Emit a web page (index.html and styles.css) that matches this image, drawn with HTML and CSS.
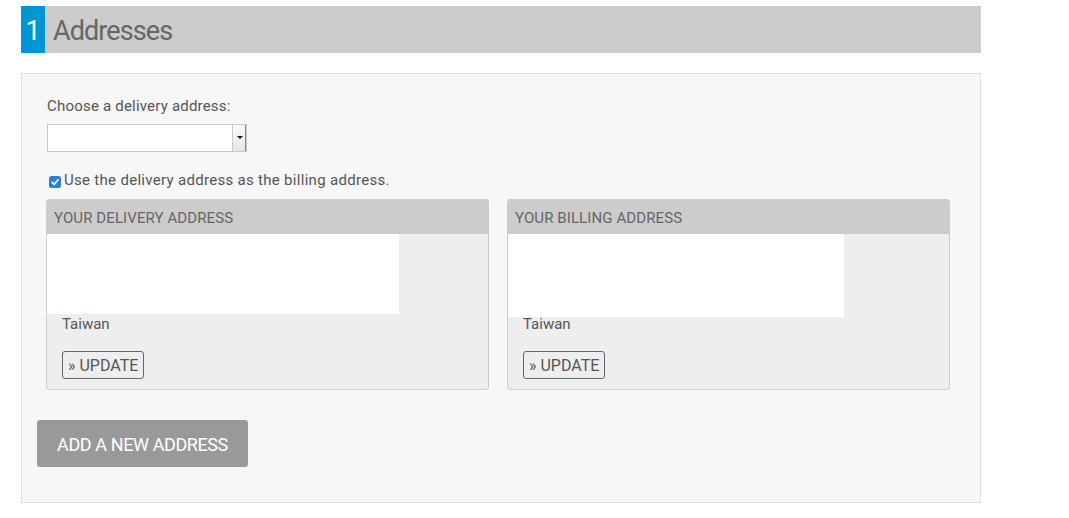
FILE: index.html
```html
<!DOCTYPE html>
<html>
<head>
<meta charset="utf-8">
<link rel="stylesheet" href="styles.css">
</head>
<body>
<div class="page">
  <h1 class="step-title"><span class="step-num">1</span><span class="step-label">Addresses</span></h1>
  <div class="panel">
    <label class="field-label">Choose a delivery address:</label>
    <div class="select"><span class="select-arrow"></span></div>
    <label class="check-row"><span class="checkbox"><svg viewBox="0 0 12 12" width="12" height="12"><rect x="0" y="0" width="12" height="12" rx="2.5" fill="#2d7fd6"/><path d="M3 6.3 L5.1 8.4 L9.2 3.8" fill="none" stroke="#fff" stroke-width="1.6" stroke-linecap="round" stroke-linejoin="round"/></svg></span>Use the delivery address as the billing address.</label>
    <div class="cards">
      <div class="card">
        <div class="card-head">YOUR DELIVERY ADDRESS</div>
        <div class="card-body">
          <div class="redact redact-a"></div>
          <div class="country">Taiwan</div>
          <button class="update">» UPDATE</button>
        </div>
      </div>
      <div class="card">
        <div class="card-head">YOUR BILLING ADDRESS</div>
        <div class="card-body">
          <div class="redact redact-b"></div>
          <div class="country">Taiwan</div>
          <button class="update">» UPDATE</button>
        </div>
      </div>
    </div>
    <button class="add-btn">ADD A NEW ADDRESS</button>
  </div>
</div>
</body>
</html>
```
FILE: styles.css
```css
html, body {
  margin: 0;
  padding: 0;
  background: #fff;
}
body {
  font-family: Roboto, "Liberation Sans", sans-serif;
  color: #555;
}
.page {
  width: 960px;
  padding: 6px 0 0 21px;
}
.step-title {
  margin: 0;
  height: 47px;
  display: flex;
  align-items: center;
  background: #cccccc;
  font-weight: 400;
  font-size: 27px;
}
.step-num {
  width: 24px;
  height: 47px;
  background: #0096d4;
  color: #fff;
  display: flex;
  align-items: center;
  justify-content: center;
  padding-top: 3px;
  box-sizing: border-box;
}
.step-label {
  margin-left: 8px;
  padding-top: 3px;
  color: #666;
  letter-spacing: -0.9px;
}
.panel {
  margin-top: 20px;
  background: #f7f7f7;
  border: 1px solid #dddddd;
  height: 430px;
  box-sizing: border-box;
  padding: 22px 0 0 25px;
}
.field-label {
  display: block;
  font-size: 15px;
  color: #555;
  line-height: 20px;
  letter-spacing: 0.2px;
}
.select {
  margin-top: 8px;
  width: 200px;
  height: 28px;
  box-sizing: border-box;
  background: #fff;
  border: 1px solid #c8c8c8;
  position: relative;
}
.select-arrow {
  position: absolute;
  right: 0;
  top: 0;
  width: 14px;
  height: 26px;
  border-left: 1px solid #ccc;
  border-right: 1px solid #888;
  box-sizing: border-box;
  background: linear-gradient(#fafafa, #e6e6e6);
}
.select-arrow::after {
  content: "";
  position: absolute;
  left: 4px;
  top: 11px;
  border-left: 3px solid transparent;
  border-right: 3px solid transparent;
  border-top: 3px solid #111;
}
.check-row {
  display: flex;
  align-items: center;
  margin-top: 18px;
  font-size: 15px;
  line-height: 20px;
  color: #555;
  letter-spacing: 0.3px;
}
.checkbox {
  display: flex;
  margin: 3px 3px 0 2px;
}
.cards {
  display: flex;
  gap: 18px;
  margin: 9px 0 0 -1px;
}
.card {
  width: 443px;
  height: 191px;
  box-sizing: border-box;
  border: 1px solid #cccccc;
  border-radius: 3px;
  background: #eeeeee;
  overflow: hidden;
}
.card-head {
  height: 34px;
  background: #cccccc;
  font-size: 15px;
  line-height: 36px;
  padding-left: 7px;
  color: #666;
  letter-spacing: 0.1px;
}
.card-body {
  position: relative;
  padding: 80px 0 0 15px;
}
.redact {
  position: absolute;
  top: 0;
  left: 0;
  background: #fff;
}
.redact-a { width: 352px; height: 80px; }
.redact-b { width: 336px; height: 83px; }
.country {
  font-size: 15px;
  line-height: 20px;
  color: #555;
}
.update {
  margin-top: 17px;
  font-family: inherit;
  font-size: 16px;
  color: #555;
  background: transparent;
  border: 1px solid #666;
  border-radius: 3px;
  height: 28px;
  padding: 0 5px;
}
.add-btn {
  margin: 30px 0 0 -10px;
  width: 211px;
  height: 47px;
  background: #999999;
  color: #fff;
  border: none;
  border-radius: 3px;
  font-family: inherit;
  font-size: 18px;
  letter-spacing: -0.4px;
  padding-top: 3px;
}
```
